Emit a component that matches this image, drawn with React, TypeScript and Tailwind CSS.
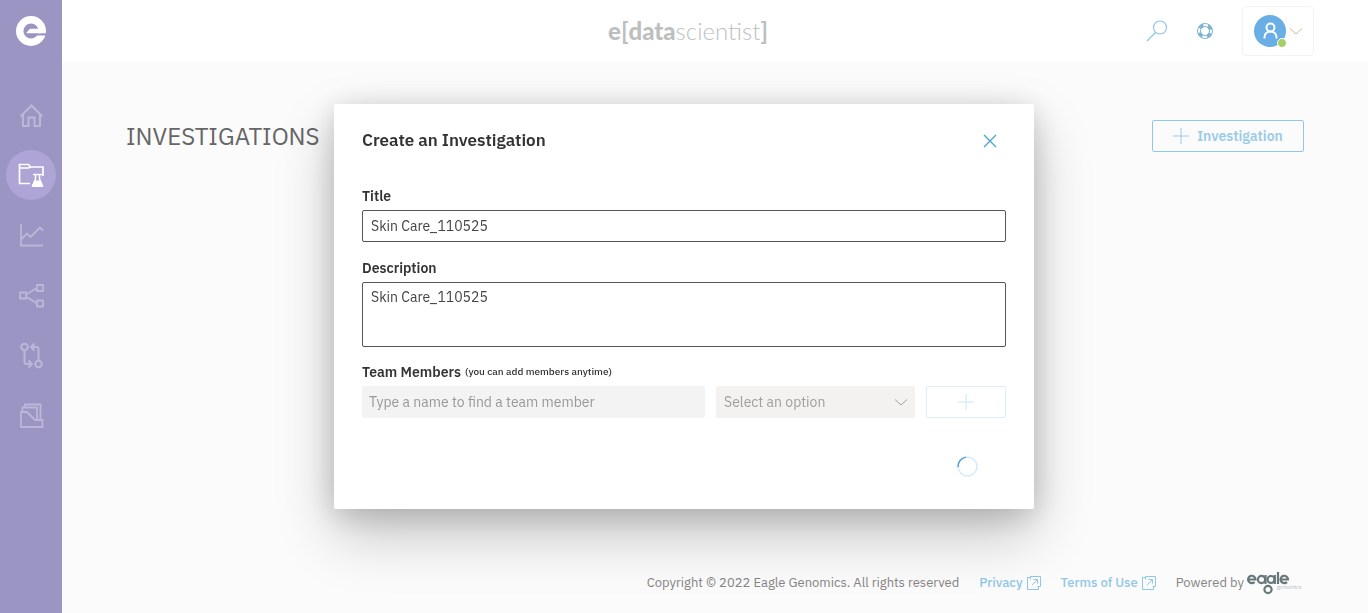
import type { ReactNode } from "react";

const Stroke = ({ size, box, width = 2, className = "", children }: { size: number; box: string; width?: number; className?: string; children: ReactNode }) => (
  <svg width={size} height={size} viewBox={box} fill="none" stroke="currentColor" strokeWidth={width} aria-hidden="true" className={className}>
    {children}
  </svg>
);

const navItems: { label: string; icon: ReactNode }[] = [
  {
    label: "Home",
    icon: <path d="M2.500 14.500 13.500 3.500l11 11M5 12.500V24h5.500v-8.500h6V24H22V12.500" />,
  },
  {
    label: "Investigations",
    icon: (
      <>
        <path d="M12 21.500H1.500V2.500h9l2 2.500h12.500V14M1.500 6h9l2-1" strokeWidth="1.700" />
        <path d="M15 12.500h9M17.500 13v4L14.500 24M21.500 13v4l3 7" strokeWidth="1.500" />
        <path d="M16.500 18.500h6l3 6.500h-12z" fill="currentColor" stroke="none" />
      </>
    ),
  },
  {
    label: "Analytics",
    icon: <path d="M3 2v21.500h22M3.500 17 9 11.500l3.500 3.500L22 5.500l3 3" strokeWidth="1.800" />,
  },
  {
    label: "Network",
    icon: <path d="M2 10.500h6v6H2zM19 3h6v6h-6zM19 18.500h6v6h-6zM8 12.500 19 6M8 14.500l11 7" strokeWidth="1.800" />,
  },
  {
    label: "Compare",
    icon: (
      <>
        <circle cx="6.500" cy="5" r="3.300" />
        <circle cx="20.500" cy="22" r="3.300" />
        <path d="M6.500 8.500V20q0 2 2 2H14M10.500 18.500 14 22l-3.500 3.500M20.500 18.500V7q0-2-2-2H13M16.500 1.500 13 5l3.500 3.500" />
      </>
    ),
  },
  {
    label: "Library",
    icon: <path d="M3 10h6l8 8h7.500v7H3zM4.500 9.500V5.500H19V17.500M7 5V2.500h15.500V17.500" strokeWidth="1.800" />,
  },
];

const Plus = ({ className = "", width }: { className?: string; width: number }) => (
  <Stroke size={16} box="0 0 16 16" width={width} className={className}>
    <path d="M8 0v16M0 8h16" />
  </Stroke>
);

const External = () => (
  <Stroke size={14} box="0 0 14 14" width={1}>
    <path d="M4 1.500H.500v12h11V10M3.500 3.500v-3h10v10h-3M5 9l5.500-5.500M6.500 3.500h4v4" />
  </Stroke>
);

function Sidebar() {
  return (
    <aside className="flex w-[62px] shrink-0 flex-col items-center bg-[#9b95c4]">
      <a href="#" aria-label="Eagle Genomics" className="mt-4 mb-11 block">
        <svg width="30" height="30" viewBox="0 0 30 30" aria-hidden="true">
          <circle cx="15" cy="15" r="11.300" fill="none" stroke="#fff" strokeWidth="7.400" />
          <path d="M10 17.200h20v2.300H12z" fill="#9b95c4" />
          <path d="M10 17.200 14 12.800h9.500l1.500 4.400z" fill="#fff" />
        </svg>
      </a>
      <nav aria-label="Main" className="flex flex-col gap-[10px]">
        {navItems.map((item) => {
          const active = item.label === "Investigations";
          return (
            <a
              key={item.label}
              href="#"
              aria-label={item.label}
              aria-current={active ? "page" : undefined}
              className={`flex size-[50px] items-center justify-center rounded-full ${active ? "bg-[#aea4d6] text-white" : "text-[#bcb7d8]"}`}
            >
              <Stroke size={27} box="0 0 27 27">{item.icon}</Stroke>
            </a>
          );
        })}
      </nav>
    </aside>
  );
}

function Header() {
  return (
    <header className="grid h-[62px] shrink-0 grid-cols-[1fr_auto_1fr] items-center bg-white pr-[54px]">
      <div />
      <div className="font-['Lato',sans-serif] text-2xl leading-8 text-[#bdbfbf]">
        <span className="font-black">e</span>
        <span className="font-bold">[</span>
        <span className="font-black">data</span>
        <span className="font-light">scientist</span>
        <span className="font-bold">]</span>
      </div>
      <div className="flex items-center justify-end">
        <button aria-label="Search" className="mr-7 text-[#8fc4e2]">
          <Stroke size={22} box="0 0 22 22" width={1.2}>
            <circle cx="14" cy="7.500" r="6.500" />
            <path d="M9.500 12.500 1 21" />
          </Stroke>
        </button>
        <button aria-label="Help" className="mr-7 text-[#7fb4d4]">
          <svg width="18" height="18" viewBox="0 0 18 18" fill="none" stroke="currentColor" aria-hidden="true">
            <circle cx="9" cy="9" r="7.500" />
            <circle cx="9" cy="9" r="4.500" />
            <circle cx="9" cy="9" r="6" strokeWidth="3.600" strokeDasharray="4.700 4.725" strokeDashoffset="-2.350" />
          </svg>
        </button>
        <button aria-label="Account" className="flex h-[50px] w-[72px] items-center rounded border border-[#f3f3f3] pl-[11px]">
          <svg width="34" height="34" viewBox="0 0 34 34" fill="none" aria-hidden="true">
            <circle cx="16" cy="17" r="16" fill="#69afe5" />
            <circle cx="16.500" cy="13.500" r="4" stroke="#fff" strokeWidth="2" />
            <path d="M10.500 24.500v-1.500a6 5.500 0 0 1 12 0v1.500" stroke="#fff" strokeWidth="2" />
            <circle cx="28" cy="29" r="4.500" fill="#a4d065" stroke="#fff" strokeWidth="1" />
          </svg>
          <Stroke size={12} box="0 0 12 12" width={1} className="ml-[2px] text-[#c9b79c]">
            <path d="M0 3.500 6 9l6-5.500" />
          </Stroke>
        </button>
      </div>
    </header>
  );
}

function Footer() {
  return (
    <footer className="flex items-center justify-end gap-5 pr-[66px] pb-[18px] text-[13px] leading-5 text-[#858585]">
      <span>Copyright © 2022 Eagle Genomics. All rights reserved</span>
      <a href="#" className="flex items-center gap-1 font-medium text-[#8fc8e6]">
        Privacy <External />
      </a>
      <a href="#" className="flex items-center gap-1 font-medium text-[#8fc8e6]">
        Terms of Use <External />
      </a>
      <span className="flex items-center">
        Powered by
        <svg width="56" height="24" viewBox="0 0 56 24" className="ml-[2px]" role="img" aria-label="eagle genomics">
          <g fill="none" stroke="#68777c" strokeWidth="2.200">
            <path d="M2.500 8.500h7A3.700 3.700 0 1 0 8.500 11" />
            <circle cx="15.500" cy="8.500" r="3.600" />
            <path d="M19.500 4v9" />
            <circle cx="25" cy="8.500" r="3.500" />
            <path d="M28.800 4v9" />
            <circle cx="22" cy="18.500" r="3.600" />
            <path d="M32 1v12M35 8.500h7A3.700 3.700 0 1 0 41 11" />
          </g>
          <text x="31" y="18" fontSize="6" fill="#858f94" fontFamily="Lato, sans-serif" fontWeight="300">genomics</text>
        </svg>
      </span>
    </footer>
  );
}

function CreateDialog() {
  const field = "block w-full rounded-[2px] border border-[#555] bg-white px-2 text-sm text-[#444] outline-none";
  return (
    <div className="fixed inset-0 flex items-center justify-center">
      <section
        role="dialog"
        aria-modal="true"
        aria-labelledby="dialog-title"
        className="w-[700px] rounded-[2px] bg-white px-7 pt-[22px] pb-8 shadow-[0_26px_58px_rgba(0,0,0,0.22),0_5px_30px_rgba(0,0,0,0.18)]"
      >
        <div className="flex h-[30px] items-center justify-between">
          <h2 id="dialog-title" className="text-[17px] font-semibold text-[#333]">Create an Investigation</h2>
          <button aria-label="Close" className="mr-[9px] text-[#47a3d2]">
            <Stroke size={14} box="0 0 14 14" width={1.3}>
              <path d="m1 1 12 12M13 1 1 13" />
            </Stroke>
          </button>
        </div>
        <form className="mt-[30px] text-[#333]">
          <label htmlFor="title" className="block text-sm leading-5 font-semibold">Title</label>
          <input id="title" defaultValue="Skin Care_110525" className={`mt-1 h-8 ${field}`} />
          <label htmlFor="description" className="mt-4 block text-sm leading-5 font-semibold">Description</label>
          <textarea id="description" defaultValue="Skin Care_110525" className={`mt-1 h-[65px] resize-none py-1 leading-5 ${field}`} />
          <label htmlFor="member" className="mt-[15px] flex items-center gap-1 text-sm leading-5 font-semibold">
            Team Members <span className="text-[10px] font-medium">(you can add members anytime)</span>
          </label>
          <div className="mt-1 flex gap-[11px]">
            <input
              id="member"
              disabled
              placeholder="Type a name to find a team member"
              className="h-8 min-w-0 flex-1 rounded-[2px] bg-[#f3f3f3] px-[7px] text-sm placeholder:text-[#999]"
            />
            <div className="relative w-[199px]">
              <select aria-label="Role" disabled className="h-8 w-full appearance-none rounded-[2px] bg-[#f3f2f1] px-2 text-sm text-[#a19f9d] opacity-100">
                <option>Select an option</option>
              </select>
              <Stroke size={12} box="0 0 12 12" width={1} className="pointer-events-none absolute top-[10px] right-2 text-[#a19f9d]">
                <path d="M0 3.500 6 9l6-5.500" />
              </Stroke>
            </div>
            <button type="button" disabled aria-label="Add member" className="flex h-8 w-20 items-center justify-center rounded-[2px] border border-[#dceef8] text-[#dceef8]">
              <Plus width={1.5} />
            </button>
          </div>
          <div role="status" aria-label="Saving" className="mt-[38px] mr-7 flex justify-end">
            <Stroke size={21} box="0 0 21 21" width={1.5} className="text-[#d5ebf7]">
              <circle cx="10.500" cy="10.500" r="9.500" />
              <path d="M1 11A9.500 9.500 0 0 1 9 1.120" stroke="#4ba3d3" />
            </Stroke>
          </div>
        </form>
      </section>
    </div>
  );
}

export default function App() {
  return (
    <div className="flex min-h-screen bg-[#fbfbfb] font-['IBM_Plex_Sans','Noto_Sans',sans-serif]">
      <Sidebar />
      <div className="flex min-w-0 flex-1 flex-col">
        <Header />
        <main className="flex flex-1 items-start justify-between px-16 pt-[58px]">
          <h1 className="text-2xl leading-8 text-[#666]">INVESTIGATIONS</h1>
          <button className="flex h-8 w-[152px] items-center justify-center gap-2 rounded-[2px] border border-[#8fc8e6] text-sm font-semibold text-[#9acce8]">
            <Plus width={1} />
            Investigation
          </button>
        </main>
        <Footer />
      </div>
      <CreateDialog />
    </div>
  );
}
